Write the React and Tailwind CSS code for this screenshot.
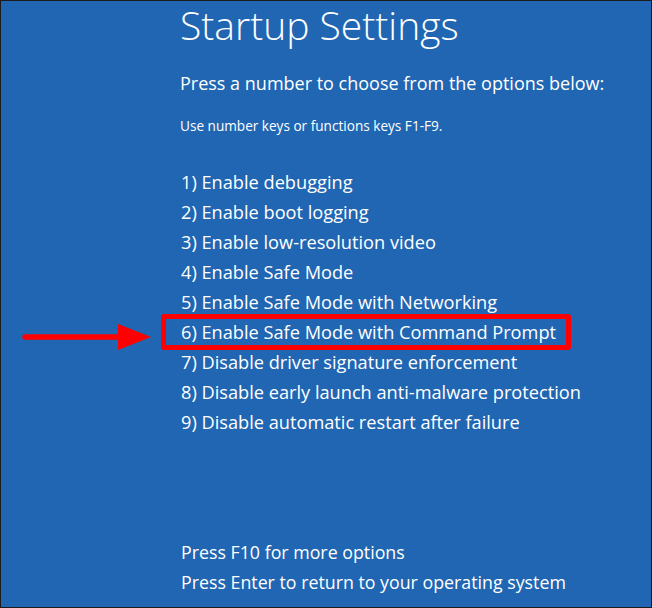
import React from 'react';

const options = [
  '1) Enable debugging',
  '2) Enable boot logging',
  '3) Enable low-resolution video',
  '4) Enable Safe Mode',
  '5) Enable Safe Mode with Networking',
  '6) Enable Safe Mode with Command Prompt',
  '7) Disable driver signature enforcement',
  '8) Disable early launch anti-malware protection',
  '9) Disable automatic restart after failure',
];

// flecha roja que apunta a la opcion 6
const Arrow = () => (
  <svg className="absolute left-[-180px] top-0" width="152" height="40" viewBox="0 0 152 40">
    <line x1="25" y1="20" x2="122" y2="20" stroke="#ff0000" strokeWidth="5.5" strokeLinecap="round" />
    <polygon points="118,7 151,20 118,33" fill="#ff0000" />
  </svg>
);

export default function App() {
  return (
    <div className="w-[652px] h-[608px] bg-[#1c1c1c] p-px">
      <div
        className="w-full h-full bg-[#2166b2] text-white flex flex-col pl-[179px]"
        style={{ fontFamily: '"Open Sans", "Noto Sans", sans-serif' }}
      >
        <h1 className="text-[39px] leading-[48px] font-light">Startup Settings</h1>
        <p className="text-[18px] leading-[24px] mt-[22px]">Press a number to choose from the options below:</p>
        <p className="text-[13.6px] leading-[18px] mt-[22px]">Use number keys or functions keys F1-F9.</p>
        <ul className="mt-[32px] flex flex-col">
          {options.map((opt, i) => (
            <li key={opt} className="relative text-[18.2px] leading-[30px] pl-[1px]">
              {i === 5 && (
                <>
                  <span className="absolute left-[-19px] top-[-3px] w-[410px] h-[36px] border-[5px] border-[#ff0000] rounded-[3px]" />
                  <Arrow />
                </>
              )}
              {opt}
            </li>
          ))}
        </ul>
        <div className="mt-auto mb-[10px] flex flex-col text-[17.8px] leading-[30px] pl-[1px]">
          <span>Press F10 for more options</span>
          <span>Press Enter to return to your operating system</span>
        </div>
      </div>
    </div>
  );
}
